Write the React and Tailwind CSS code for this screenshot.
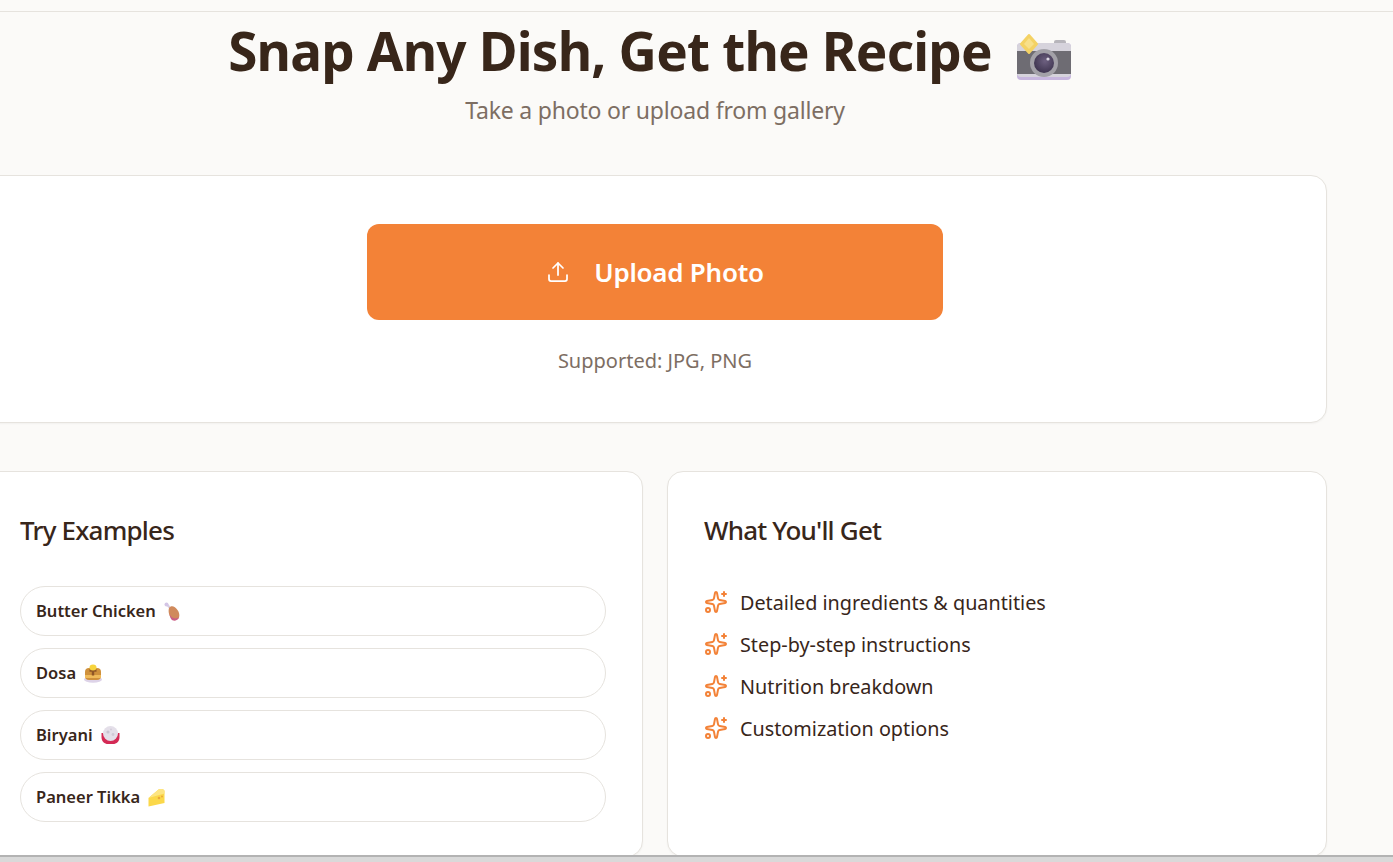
import { Upload, Sparkles } from "lucide-react";

function CameraEmoji() {
  return (
    <svg width="56" height="48" viewBox="0 0 56 48" className="shrink-0 mt-3">
      <defs>
        <radialGradient id="lens" cx="0.55" cy="0.4" r="0.6">
          <stop offset="0" stopColor="#6d6080" />
          <stop offset="1" stopColor="#3f3550" />
        </radialGradient>
      </defs>
      <rect x="38" y="7" width="12" height="6" rx="2" fill="#b7b5bb" />
      <rect x="1" y="10" width="54" height="37" rx="4" fill="#c7b6de" />
      <rect x="1" y="10" width="54" height="34" rx="4" fill="#d6d3dc" />
      <rect x="1" y="18" width="54" height="23" fill="#6e6c73" />
      <circle cx="28" cy="30" r="14" fill="#a3a1a8" />
      <circle cx="28" cy="30" r="10" fill="url(#lens)" />
      <circle cx="32" cy="26" r="1.6" fill="#ddd9e3" />
      <path d="M13 2 L21 11 L13 20 L5 11 Z" fill="#f4d264" stroke="#f4d264" strokeWidth="2" strokeLinejoin="round" />
      <path d="M13 5 L18 11 L13 16 L8 11 Z" fill="#f8e08a" />
    </svg>
  );
}

function DrumstickEmoji() {
  return (
    <svg width="17" height="19" viewBox="0 0 17 19">
      <path d="M2.5 2 L7 7" stroke="#d8cde2" strokeWidth="2.2" />
      <circle cx="2.5" cy="2.5" r="2" fill="#d3c5e6" />
      <path d="M5 6 C7 3 11 4 13.5 8 C16.5 12 16 18 11 18 C6.5 18 3.5 11 5 6 Z" fill="#d08a5c" />
      <path d="M5.5 12 C7 16 11 18 15.2 15 C14 18.5 11 19 9 18.5 C7 18 6 15 5.5 12 Z" fill="#cb5f86" />
    </svg>
  );
}

function PancakeEmoji() {
  return (
    <svg width="18" height="19" viewBox="0 0 18 19">
      <ellipse cx="9" cy="15.5" rx="9" ry="3.2" fill="#ddd3e8" />
      <rect x="1" y="4" width="16" height="12" rx="4" fill="#cf913c" />
      <rect x="1" y="11" width="16" height="3" fill="#f0bb5a" />
      <path d="M5.5 6.5 H12.5 M9 6.5 V11.5" stroke="#8f5626" strokeWidth="2.4" />
      <ellipse cx="9" cy="3.5" rx="3.5" ry="3" fill="#f7d43c" />
    </svg>
  );
}

function RiceEmoji() {
  return (
    <svg width="19" height="18" viewBox="0 0 19 18">
      <path d="M0.5 7 H18.5 V11 C18.5 15.5 15.5 18 12 18 H7 C3.5 18 0.5 15.5 0.5 11 Z" fill="#d42a55" />
      <circle cx="9.5" cy="7.5" r="7.5" fill="#e4dfe9" />
      <circle cx="7" cy="6" r="1.6" fill="#c9c3d1" />
      <circle cx="12" cy="8.5" r="1.4" fill="#cfc9d6" />
      <circle cx="10" cy="3.5" r="1" fill="#d3cdda" />
    </svg>
  );
}

function CheeseEmoji() {
  return (
    <svg width="17" height="19" viewBox="0 0 17 19">
      <path d="M0.5 10 L10.5 1.5 C13 0.5 16 1 16.5 3 V15 L0.5 18.5 Z" fill="#fbd84a" />
      <path d="M0.5 10 L16.5 5.5 L16.5 3 C16 1 13 0.5 10.5 1.5 Z" fill="#fde583" />
      <circle cx="11" cy="10" r="1.3" fill="#eba83a" />
      <circle cx="14" cy="8.5" r="1" fill="#eba83a" />
    </svg>
  );
}

const examples = [
  { name: "Butter Chicken", Emoji: DrumstickEmoji },
  { name: "Dosa", Emoji: PancakeEmoji },
  { name: "Biryani", Emoji: RiceEmoji },
  { name: "Paneer Tikka", Emoji: CheeseEmoji },
];

const features = [
  "Detailed ingredients & quantities",
  "Step-by-step instructions",
  "Nutrition breakdown",
  "Customization options",
];

export default function App() {
  return (
    <div className="h-[862px] w-[1393px] overflow-hidden bg-[#fbfaf8] flex flex-col font-['Noto_Sans','Open_Sans',sans-serif] text-[#38261a]">
      <div className="h-3 shrink-0 border-b border-[#e6e3de]"></div>

      <main className="flex-1 overflow-hidden">
        <div className="w-[1344px] -ml-[17px]">
          {/* Title */}
          <div className="pt-[9px] text-center">
            <h1 className="flex justify-center items-center gap-6 pr-[10px] text-[53px] leading-[60px] font-bold tracking-[-0.8px]">
              <span>Snap Any Dish, Get the Recipe</span>
              <CameraEmoji />
            </h1>
            <p className="mt-[14px] text-[23px] leading-[30px] tracking-[-0.2px] text-[#7d6e63]">
              Take a photo or upload from gallery
            </p>
          </div>

          {/* Upload */}
          <section className="mt-[50px] h-[248px] rounded-2xl border border-[#e6e3de] bg-white shadow-[0_1px_2px_rgba(0,0,0,0.04)] flex flex-col items-center pt-12">
            <button className="w-[576px] h-24 rounded-xl bg-[#f38237] text-white flex items-center justify-center gap-6 text-[26px] font-semibold tracking-[-0.25px]">
              <Upload size={24} strokeWidth={1.75} />
              Upload Photo
            </button>
            <p className="mt-[28px] text-[20px] leading-[26px] text-[#7d6e63]">Supported: JPG, PNG</p>
          </section>

          <div className="mt-12 grid grid-cols-2 gap-6">
            {/* Examples */}
            <section className="h-[386px] rounded-2xl border border-[#e6e3de] bg-white shadow-[0_1px_2px_rgba(0,0,0,0.04)] pt-9 pl-9 pr-9">
              <h2 className="text-[26px] leading-[44px] font-medium tracking-[-0.8px]">Try Examples</h2>
              <div className="mt-[34px] flex flex-col gap-3">
                {examples.map(({ name, Emoji }) => (
                  <button
                    key={name}
                    className="h-[50px] rounded-full border border-[#e6e3de] bg-white px-[15px] flex items-center gap-2 text-[16.5px] font-semibold"
                  >
                    {name}
                    <Emoji />
                  </button>
                ))}
              </div>
            </section>

            {/* Features */}
            <section className="h-[386px] rounded-2xl border border-[#e6e3de] bg-white shadow-[0_1px_2px_rgba(0,0,0,0.04)] pt-9 pl-9 pr-9">
              <h2 className="text-[26px] leading-[44px] font-medium tracking-[-0.8px]">What You'll Get</h2>
              <ul className="mt-9 flex flex-col gap-3">
                {features.map((item) => (
                  <li key={item} className="flex items-center gap-3 h-[30px] text-[19.8px]">
                    <Sparkles size={24} strokeWidth={2} className="text-[#f38237] shrink-0 -mt-[3px]" />
                    {item}
                  </li>
                ))}
              </ul>
            </section>
          </div>
        </div>
      </main>

      <div className="h-[7px] shrink-0 border-t-2 border-[#b3b3b3] bg-[#d9d9d9]"></div>
    </div>
  );
}
